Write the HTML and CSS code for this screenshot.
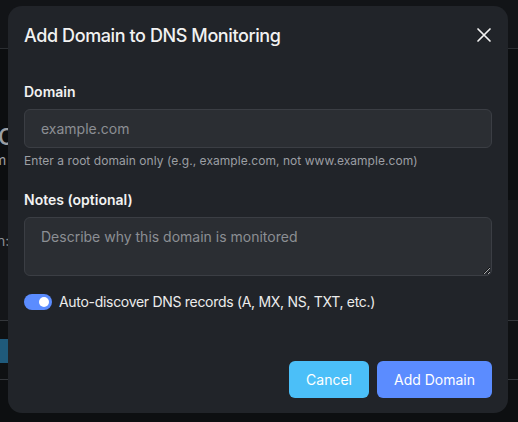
FILE: index.html
```html
<!DOCTYPE html>
<html lang="en">
  <head>
    <meta charset="UTF-8" />
    <meta name="viewport" content="width=device-width, initial-scale=1" />
    <title>Add Domain | DNS Monitoring</title>
    <link rel="stylesheet" href="styles.css">
  </head>
  <body>
    <div class="page">
      <div class="page-header"></div>
      <div class="page-hero">
        <div class="hero-title">Doc</div>
        <div class="hero-sub">item</div>
      </div>
      <div class="page-panel">
        <div class="panel-text">Domain:</div>
      </div>
      <div class="page-row">
        <span class="row-btn"></span>
      </div>
      <div class="page-rest"></div>
    </div>

    <div class="modal">
      <div class="modal-head">
        <h2>Add Domain to DNS Monitoring</h2>
        <button class="close-btn" aria-label="Close">
          <svg width="16" height="16" viewBox="0 0 16 16">
            <path d="M2 2L14 14M14 2L2 14" stroke="#f2f2f2" stroke-width="1.7" stroke-linecap="round" />
          </svg>
        </button>
      </div>
      <form class="modal-body">
        <label class="field-label" for="domain">Domain</label>
        <input type="text" id="domain" placeholder="example.com" />
        <p class="hint">Enter a root domain only (e.g., example.com, not www.example.com)</p>

        <label class="field-label" for="notes">Notes (optional)</label>
        <textarea id="notes" placeholder="Describe why this domain is monitored"></textarea>

        <div class="toggle-row">
          <span class="toggle"><span class="knob"></span></span>
          <span class="toggle-text">Auto-discover DNS records (A, MX, NS, TXT, etc.)</span>
        </div>
      </form>
      <div class="modal-foot">
        <button class="btn btn-cancel" type="button">Cancel</button>
        <button class="btn btn-add" type="button">Add Domain</button>
      </div>
    </div>
  </body>
</html>
```

FILE: styles.css
```css
body {
  margin: 0;
  background-color: #0d0f11;
  font-family: Inter, "Noto Sans", sans-serif;
  height: 422px;
  overflow: hidden;
}
.page {
  display: flex;
  flex-direction: column;
}
.page-header {
  height: 48px;
  background-color: #121417;
  border-bottom: 1px solid #2b2e32;
}
.page-hero {
  height: 151px;
  background-color: #0c0e10;
  padding-top: 68px;
  box-sizing: border-box;
  color: #9a9ea3;
}
.hero-title {
  font-size: 30px;
  line-height: 34px;
  margin-left: -42px;
}
.hero-sub {
  font-size: 14px;
  margin-left: -22px;
}
.page-panel {
  height: 120px;
  background-color: #141619;
  padding-top: 32px;
  box-sizing: border-box;
}
.panel-text {
  color: #8b8f94;
  font-size: 14px;
  margin-left: -45px;
}
.page-row {
  height: 60px;
  border-top: 1px solid #34373b;
  border-bottom: 1px solid #34373b;
  background-color: #0f1113;
  padding-top: 18px;
  box-sizing: border-box;
}
.row-btn {
  display: block;
  width: 40px;
  height: 24px;
  background-color: #1f5a7b;
}
.page-rest {
  height: 42px;
  background-color: #0d0f11;
}

.modal {
  position: absolute;
  left: 8px;
  top: 6px;
  width: 500px;
  height: 407px;
  background-color: #212429;
  border-radius: 14px;
  box-sizing: border-box;
  padding: 0 16px;
  display: flex;
  flex-direction: column;
  color: #f2f2f2;
}
.modal-head {
  display: flex;
  justify-content: space-between;
  align-items: center;
  height: 58px;
}
.modal-head h2 {
  margin: 0;
  font-size: 18px;
  font-weight: 500;
  letter-spacing: -0.4px;
}
.close-btn {
  background: none;
  border: none;
  padding: 0;
  width: 16px;
  height: 16px;
  cursor: pointer;
}
.modal-body {
  display: flex;
  flex-direction: column;
  padding-top: 19px;
  flex: 1;
}
.field-label {
  font-size: 14px;
  font-weight: 600;
  color: #f2f2f2;
  margin-bottom: 9px;
}
input[type="text"],
textarea {
  font-family: inherit;
  font-size: 14px;
  color: #e6e6e6;
  background-color: #2b2e33;
  border: 1px solid #3b3e44;
  border-radius: 6px;
  box-sizing: border-box;
  width: 100%;
  padding: 0 16px;
}
input[type="text"] {
  height: 39px;
}
textarea {
  height: 59px;
  padding-top: 10px;
  resize: vertical;
}
input::placeholder,
textarea::placeholder {
  color: #8c8f94;
}
.hint {
  margin: 5px 0 23px;
  font-size: 12px;
  color: #9c9fa4;
  letter-spacing: 0.05px;
}
.toggle-row {
  display: flex;
  align-items: center;
  gap: 7px;
  margin-top: 17px;
}
.toggle {
  width: 28px;
  height: 16px;
  border-radius: 8px;
  background-color: #5b8cff;
  position: relative;
}
.knob {
  position: absolute;
  right: 3px;
  top: 3px;
  width: 10px;
  height: 10px;
  border-radius: 50%;
  background-color: #fff;
}
.toggle-text {
  font-size: 14px;
  color: #ececec;
  letter-spacing: -0.3px;
}
.modal-foot {
  display: flex;
  justify-content: flex-end;
  gap: 8px;
  padding-bottom: 15px;
}
.btn {
  height: 37px;
  border: none;
  border-radius: 6px;
  color: #fff;
  font-family: inherit;
  font-size: 14px;
  padding: 0 17px;
  cursor: pointer;
}
.btn-cancel {
  background-color: #4bbff8;
}
.btn-add {
  background-color: #5b8cff;
}
```
